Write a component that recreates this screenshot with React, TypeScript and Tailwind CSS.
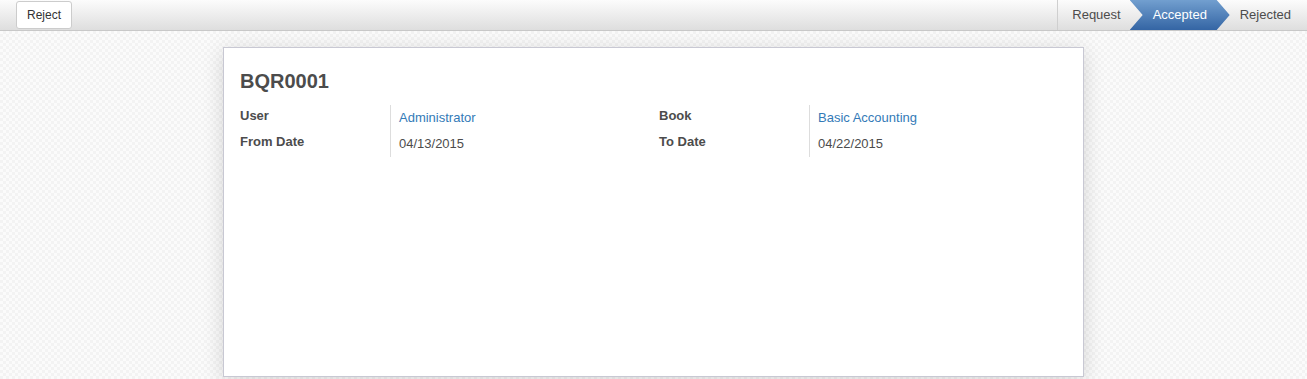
import React from 'react'

const font = { fontFamily: '"Liberation Sans", Arial, sans-serif' }

interface Field {
  label: string
  value: string
  link?: boolean
}

const leftFields: Field[] = [
  { label: 'User', value: 'Administrator', link: true },
  { label: 'From Date', value: '04/13/2015' },
]

const rightFields: Field[] = [
  { label: 'Book', value: 'Basic Accounting', link: true },
  { label: 'To Date', value: '04/22/2015' },
]

const FieldGroup: React.FC<{ fields: Field[] }> = ({ fields }) => (
  <div className="w-[419px] shrink-0 flex flex-col">
    {fields.map((f) => (
      <div key={f.label} className="flex h-[26px]">
        <div className="w-[150px] shrink-0 text-[13px] font-bold text-[#4c4c4c] leading-[18px] pt-[2px]">
          {f.label}
        </div>
        <div
          className={`flex-1 border-l border-[#dddddd] pl-[8px] text-[13px] leading-[18px] pt-[4px] ${
            f.link ? 'text-[#337ab7]' : 'text-[#4c4c4c]'
          }`}
        >
          {f.value}
        </div>
      </div>
    ))}
  </div>
)

export default function App() {
  return (
    <div style={font} className="w-[1307px] h-[379px] overflow-hidden flex flex-col bg-white">
      {/* Status bar */}
      <div className="h-[31px] flex items-stretch justify-between bg-gradient-to-b from-[#fcfcfc] to-[#dedede] border-b border-[#c8c8c8]">
        <div className="flex items-start pl-[16px] pt-[1px]">
          <button className="h-[28px] w-[56px] bg-white border border-[#cccccc] rounded-[3px] text-[12px] text-[#333333]">
            Reject
          </button>
        </div>
        <div className="flex items-stretch text-[13px]">
          <div className="flex items-center border-l border-[#cfcfcf] pl-[14px] pr-[9px] text-[#4c4c4c]">
            Request
          </div>
          <div className="w-[100px] flex items-center pl-[23px] text-white bg-gradient-to-b from-[#729fcf] to-[#3465a4] [clip-path:polygon(0_0,87px_0,100px_50%,87px_100%,0_100%,13px_50%)]">
            Accepted
          </div>
          <div className="flex items-center pl-[10px] pr-[16px] text-[#4c4c4c]">Rejected</div>
        </div>
      </div>

      {/* Sheet background */}
      <div className="flex-1 flex justify-center pt-[16px] bg-[repeating-conic-gradient(#f3f3f3_0%_25%,#fbfbfb_0%_50%)] bg-[length:6px_6px]">
        <div className="w-[861px] h-[330px] bg-white border border-[#c8c8d3] shadow-[0_4px_20px_rgba(0,0,0,0.15)] px-[16px] pt-[19px]">
          <h1 className="text-[20px] font-bold text-[#4c4c4c] leading-[28px]">BQR0001</h1>
          <div className="flex mt-[10px]">
            <FieldGroup fields={leftFields} />
            <FieldGroup fields={rightFields} />
          </div>
        </div>
      </div>
    </div>
  )
}
